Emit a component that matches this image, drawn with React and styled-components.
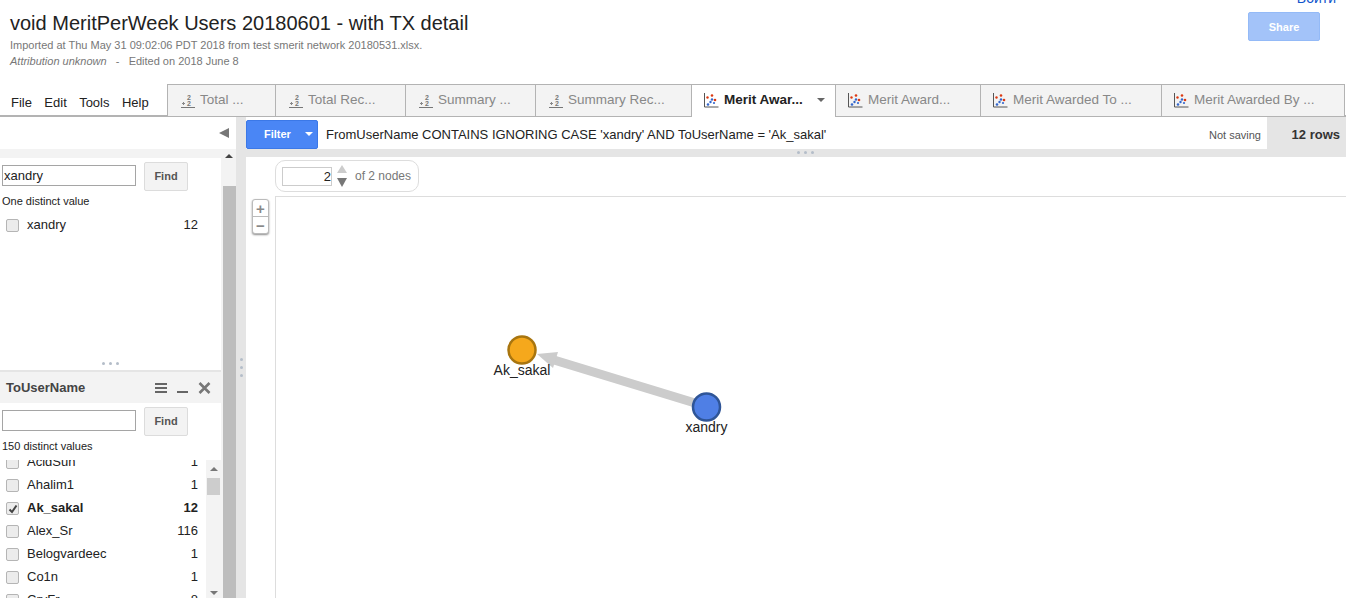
import React from 'react';
import styled, { createGlobalStyle } from 'styled-components';

const GlobalStyle = createGlobalStyle`
  html, body {
    margin: 0;
    padding: 0;
    background: #fff;
    overflow: hidden;
  }
  body {
    font-family: "Liberation Sans", Arial, sans-serif;
    color: #222;
  }
  * { box-sizing: border-box; }
`;

const Page = styled.div`
  width: 1346px;
  height: 598px;
  overflow: hidden;
  display: flex;
  flex-direction: column;
`;

/* header */
const Header = styled.header`
  height: 84px;
  flex: none;
  display: flex;
  justify-content: space-between;
  padding-left: 10px;
`;

const Title = styled.h1`
  margin: 11px 0 0;
  font-size: 20px;
  line-height: 24px;
  font-weight: 400;
  color: #222;
`;

const Meta = styled.div`
  margin-top: ${props => props.gap}px;
  font-size: 11px;
  line-height: 13px;
  color: #777;
  white-space: pre;
  em { font-style: italic; }
`;

const HeaderRight = styled.div`
  width: 72px;
  margin-right: 26px;
  display: flex;
  flex-direction: column;
`;

const SignIn = styled.a`
  height: 12px;
  margin-top: -8px;
  align-self: flex-end;
  margin-right: -16px;
  font-size: 14px;
  line-height: 12px;
  color: #15c;
  white-space: nowrap;
`;

const ShareButton = styled.button`
  width: 72px;
  height: 29px;
  margin-top: 8px;
  border: 1px solid #94baf7;
  border-radius: 2px;
  background: #a3c3f9;
  color: #fff;
  font: 700 11px "Liberation Sans", Arial, sans-serif;
  padding: 0;
`;

/* tab row */
const TabRow = styled.div`
  height: 33px;
  flex: none;
  display: flex;
  border-bottom: 2px solid #b3b3b3;
`;

const Menu = styled.nav`
  width: 167px;
  flex: none;
  display: flex;
  gap: 12.4px;
  padding: 11px 0 0 11px;
  font-size: 13px;
  line-height: 16px;
  color: #222;
`;

const Tab = styled.div`
  width: ${props => props.w}px;
  height: ${props => (props.active ? 33 : 32)}px;
  flex: none;
  display: flex;
  align-items: flex-start;
  padding: 7px 0 0 ${props => (props.chart ? 12 : 13)}px;
  gap: ${props => (props.chart ? 5 : 4)}px;
  background: ${props => (props.active ? '#fff' : '#f3f3f3')};
  border-top: 1px solid #b3b3b3;
  border-left: 1px solid #b3b3b3;
  border-right: ${props => (props.last ? '1px solid #b3b3b3' : 'none')};
  font-size: 13.5px;
  line-height: 16px;
  font-weight: ${props => (props.active ? 700 : 400)};
  color: ${props => (props.active ? '#222' : '#888')};
  white-space: nowrap;
  position: relative;
  z-index: ${props => (props.active ? 1 : 0)};
`;

const TabCaret = styled.span`
  width: 0;
  height: 0;
  margin: 6px 0 0 9px;
  border: 4px solid transparent;
  border-top: 4px solid #666;
  border-bottom: none;
`;

const TableGlyph = () => (
  <svg width="15" height="15" viewBox="0 0 15 15" style={{ flex: 'none', marginTop: 1 }}>
    <text x="6" y="6.5" fontSize="7" fontFamily="Liberation Sans" fill="#777" fontWeight="700">2</text>
    <text x="6" y="12.5" fontSize="7" fontFamily="Liberation Sans" fill="#777" fontWeight="700">2</text>
    <path d="M1 10.5h3M2.5 9v3" stroke="#888" strokeWidth="1" />
    <path d="M0 14.5h14" stroke="#777" strokeWidth="1" />
  </svg>
);

const ChartGlyph = () => (
  <svg width="15" height="16" viewBox="0 0 15 16" style={{ flex: 'none' }}>
    <path d="M0.5 1v14h14" fill="none" stroke="#555" strokeWidth="1" />
    <circle cx="8" cy="3.5" r="1.3" fill="#dc3912" />
    <circle cx="3.5" cy="5.5" r="1.2" fill="#dc3912" />
    <circle cx="11" cy="8" r="1.3" fill="#dc3912" />
    <circle cx="8" cy="7.5" r="1.2" fill="#3366cc" />
    <circle cx="6.5" cy="10" r="1.2" fill="#3366cc" />
    <circle cx="4" cy="12.5" r="1.3" fill="#3366cc" />
    <circle cx="10" cy="11" r="1.1" fill="#3366cc" />
  </svg>
);

/* body */
const Body = styled.div`
  flex: 1;
  min-height: 0;
  display: flex;
`;

const Sidebar = styled.aside`
  width: 236px;
  flex: none;
  display: flex;
  flex-direction: column;
`;

const CollapseRow = styled.div`
  height: 32px;
  flex: none;
  display: flex;
  justify-content: flex-end;
  align-items: center;
  padding-right: 7px;
`;

const CollapseArrow = styled.span`
  width: 0;
  height: 0;
  border: 5px solid transparent;
  border-left: none;
  border-right: 10px solid #777;
`;

const SideScroll = styled.div`
  flex: 1;
  min-height: 0;
  display: flex;
  background: #f3f3f3;
`;

const Cards = styled.div`
  width: 221px;
  flex: none;
  display: flex;
  flex-direction: column;
  padding-top: 9px;
`;

const Scrollbar = styled.div`
  flex: 1;
  display: flex;
  flex-direction: column;
  align-items: center;
  background: #f3f3f3;
`;

const UpArrow = styled.span`
  width: 0;
  height: 0;
  flex: none;
  margin-top: ${props => props.top}px;
  border: 4px solid transparent;
  border-top: none;
  border-bottom: 4px solid ${props => props.color || '#444'};
`;

const DownArrow = styled.span`
  width: 0;
  height: 0;
  flex: none;
  margin-top: ${props => props.top}px;
  border: 4px solid transparent;
  border-bottom: none;
  border-top: 4px solid ${props => props.color || '#444'};
`;

const ScrollThumb = styled.div`
  width: 13px;
  flex: 1;
  margin-top: 28px;
  margin-left: 2px;
  background: #bdbdbd;
`;

const FilterCard = styled.section`
  height: 212px;
  flex: none;
  background: #fff;
  position: relative;
`;

const FindRow = styled.div`
  display: flex;
  align-items: flex-start;
  gap: 8px;
  padding: 4px 0 0 2px;
`;

const FindInput = styled.input`
  width: 134px;
  height: 21px;
  margin-top: 3px;
  padding: 0 1px;
  border: 1px solid #a5a5a5;
  border-radius: 0;
  outline: none;
  font: 13px "Liberation Sans", Arial, sans-serif;
  color: #222;
`;

const FindButton = styled.button`
  width: 44px;
  height: 29px;
  padding: 0 0 2px;
  border: 1px solid #dcdcdc;
  border-radius: 2px;
  background: #f3f3f3;
  color: #555;
  font: 700 11px "Liberation Sans", Arial, sans-serif;
`;

const Distinct = styled.div`
  margin: 4px 0 0 2px;
  font-size: 11px;
  line-height: 12px;
  color: #222;
`;

const Row = styled.div`
  height: 23px;
  display: flex;
  align-items: center;
  padding: 0 8px 0 6px;
  font-size: 13px;
  font-weight: ${props => (props.checked ? 700 : 400)};
  color: #222;
`;

const RowName = styled.span`
  flex: 1;
  margin-left: 8px;
`;

const Box = styled.span`
  width: 13px;
  height: 13px;
  flex: none;
  margin-top: 2px;
  display: flex;
  align-items: center;
  justify-content: center;
  border: 1px solid #b5b5b5;
  border-radius: 2px;
  background: #ececec;
`;

const SingleList = styled.div`
  width: 206px;
  margin-top: 6px;
`;

const Grip = styled.div`
  position: absolute;
  ${props => props.vertical
    ? 'left: 4px; top: 50%; flex-direction: column;'
    : `left: calc(50% + ${props.shift || 0}px); bottom: ${props.bottom}px; margin-left: -9px;`}
  display: flex;
  gap: ${props => (props.vertical ? 5 : 4)}px;
  span {
    width: 3px;
    height: 3px;
    border-radius: 50%;
    background: #b4bdc9;
  }
`;

const Dots = ({ vertical, shift, bottom }) => (
  <Grip vertical={vertical} shift={shift} bottom={bottom}>
    <span /><span /><span />
  </Grip>
);

const PaneRule = styled.div`
  height: 2px;
  flex: none;
  background: #e5e5e5;
`;

const CardHead = styled.div`
  height: 31px;
  flex: none;
  display: flex;
  align-items: center;
  padding: 0 10px 0 6px;
  background: #f3f3f3;
  font-size: 13px;
  font-weight: 700;
  color: #444;
`;

const HeadName = styled.span`
  flex: 1;
`;

const HeadTools = styled.span`
  display: flex;
  align-items: center;
  gap: 10px;
`;

const ValueCard = styled.section`
  flex: 1;
  min-height: 0;
  background: #fff;
  display: flex;
  flex-direction: column;
`;

const ScrollList = styled.div`
  flex: 1;
  min-height: 0;
  margin-top: 8px;
  display: flex;
  overflow: hidden;
`;

const ListClip = styled.div`
  width: 206px;
  flex: none;
  overflow: hidden;
`;

const ListInner = styled.div`
  margin-top: -10px;
`;

const ListBar = styled.div`
  width: 15px;
  flex: none;
  display: flex;
  flex-direction: column;
  align-items: center;
  background: #f3f3f3;
`;

const ListThumb = styled.div`
  width: 13px;
  height: 17px;
  margin-top: 7px;
  background: #cdcdcd;
`;

const Splitter = styled.div`
  width: 10px;
  flex: none;
  background: #e5e5e5;
  position: relative;
`;

/* main column */
const Main = styled.main`
  flex: 1;
  min-width: 0;
  display: flex;
  flex-direction: column;
`;

const FilterBar = styled.div`
  height: 40px;
  flex: none;
  display: flex;
`;

const FilterLeft = styled.div`
  flex: 1;
  min-width: 0;
  display: flex;
  flex-direction: column;
`;

const FilterLine = styled.div`
  height: 32px;
  flex: none;
  display: flex;
  align-items: center;
  padding-top: 3px;
  font-size: 13px;
  color: #222;
  white-space: nowrap;
`;

const FilterButton = styled.button`
  width: 72px;
  height: 29px;
  flex: none;
  display: flex;
  align-items: center;
  padding: 0 0 1px 17px;
  border: 1px solid #3b78e7;
  border-radius: 2px;
  background: #4a86f5;
  color: #fff;
  font: 700 11px "Liberation Sans", Arial, sans-serif;
`;

const FilterCaret = styled.span`
  width: 0;
  height: 0;
  margin-left: 14px;
  border: 4px solid transparent;
  border-bottom: none;
  border-top: 4px solid #fff;
`;

const FilterText = styled.span`
  flex: 1;
  margin-left: 8px;
`;

const Saving = styled.span`
  margin-right: 6px;
  font-size: 11px;
  color: #555;
`;

const BarBand = styled.div`
  height: 8px;
  flex: none;
  background: #e5e5e5;
  position: relative;
`;

const RowCount = styled.div`
  width: 79px;
  flex: none;
  background: #e5e5e5;
  display: flex;
  align-items: center;
  justify-content: flex-end;
  padding: 0 6px 5px 0;
  font-size: 13px;
  font-weight: 700;
  color: #333;
`;

const Graph = styled.div`
  flex: 1;
  min-height: 0;
  display: flex;
  position: relative;
`;

const Gutter = styled.div`
  width: 29px;
  flex: none;
  padding: 42px 0 0 6px;
`;

const ZoomBox = styled.div`
  width: 17px;
  height: 35px;
  display: flex;
  flex-direction: column;
  background: #fff;
  border: 1px solid #bbb;
  border-radius: 3px;
  box-shadow: 0 1px 2px rgba(0, 0, 0, 0.45);
`;

const ZoomKey = styled.span`
  flex: 1;
  display: flex;
  align-items: center;
  justify-content: center;
  font-size: 15px;
  font-weight: 700;
  line-height: 1;
  color: #888;
  & + & { border-top: 1px solid #bbb; }
`;

const GraphColumn = styled.div`
  flex: 1;
  min-width: 0;
  display: flex;
  flex-direction: column;
`;

const PagerWrap = styled.div`
  height: 39px;
  flex: none;
  padding-top: 3px;
`;

const Pager = styled.div`
  width: 144px;
  height: 32px;
  display: flex;
  align-items: center;
  padding-left: 6px;
  border: 1px solid #ddd;
  border-radius: 10px;
  font-size: 12px;
  color: #777;
`;

const PageInput = styled.div`
  width: 50px;
  height: 19px;
  flex: none;
  border: 1px solid #ccc;
  text-align: right;
  font-size: 13px;
  line-height: 17px;
  color: #222;
`;

const Spinner = styled.div`
  width: 20px;
  flex: none;
  display: flex;
  flex-direction: column;
  align-items: center;
`;

const BigUp = styled.span`
  width: 0;
  height: 0;
  flex: none;
  border: 5px solid transparent;
  border-top: none;
  border-bottom: 8px solid #ccc;
`;

const BigDown = styled.span`
  width: 0;
  height: 0;
  flex: none;
  margin-top: 5px;
  border: 5px solid transparent;
  border-bottom: none;
  border-top: 9px solid #777;
`;

const PagerLabel = styled.span`
  margin-left: 3px;
  margin-top: -1px;
`;

const Canvas = styled.div`
  flex: 1;
  min-height: 0;
  border-top: 1px solid #ddd;
  border-left: 1px solid #ddd;
  position: relative;
`;

const NetworkSvg = styled.svg`
  position: absolute;
  left: 0;
  top: 0;
  text {
    font-family: "Liberation Sans", Arial, sans-serif;
    font-size: 14px;
    fill: #222;
    text-anchor: middle;
  }
`;

const tabs = [
  { w: 108, label: 'Total ...' },
  { w: 130, label: 'Total Rec...' },
  { w: 130, label: 'Summary ...' },
  { w: 156, label: 'Summary Rec...' },
  { w: 144, label: 'Merit Awar...', chart: true, active: true },
  { w: 145, label: 'Merit Award...', chart: true },
  { w: 181, label: 'Merit Awarded To ...', chart: true },
  { w: 184, label: 'Merit Awarded By ...', chart: true, last: true },
];

const users = [
  ['AcidSun', 1],
  ['Ahalim1', 1],
  ['Ak_sakal', 12, true],
  ['Alex_Sr', 116],
  ['Belogvardeec', 1],
  ['Co1n', 1],
  ['CryFr', 8],
];

function CheckRow({ name, count, checked }) {
  return (
    <Row checked={checked}>
      <Box>
        {checked && (
          <svg width="10" height="10" viewBox="0 0 10 10">
            <path d="M1.5 5.5 4 8l4.5-6.5" fill="none" stroke="#444" strokeWidth="2" />
          </svg>
        )}
      </Box>
      <RowName>{name}</RowName>
      <span>{count}</span>
    </Row>
  );
}

export default function App() {
  return (
    <Page>
      <GlobalStyle />
      <Header>
        <div>
          <Title>void MeritPerWeek Users 20180601 - with TX detail</Title>
          <Meta gap={4}>Imported at Thu May 31 09:02:06 PDT 2018 from test smerit network 20180531.xlsx.</Meta>
          <Meta gap={3}><em>Attribution unknown</em>{'   -   '}Edited on 2018 June 8</Meta>
        </div>
        <HeaderRight>
          <SignIn>Войти</SignIn>
          <ShareButton>Share</ShareButton>
        </HeaderRight>
      </Header>

      <TabRow>
        <Menu>
          <span>File</span><span>Edit</span><span>Tools</span><span>Help</span>
        </Menu>
        {tabs.map(tab => (
          <Tab key={tab.label} w={tab.w} chart={tab.chart} active={tab.active} last={tab.last}>
            {tab.chart ? <ChartGlyph /> : <TableGlyph />}
            <span>{tab.label}</span>
            {tab.active && <TabCaret />}
          </Tab>
        ))}
      </TabRow>

      <Body>
        <Sidebar>
          <CollapseRow><CollapseArrow /></CollapseRow>
          <SideScroll>
            <Cards>
              <FilterCard>
                <FindRow>
                  <FindInput defaultValue="xandry" />
                  <FindButton>Find</FindButton>
                </FindRow>
                <Distinct>One distinct value</Distinct>
                <SingleList>
                  <CheckRow name="xandry" count={12} />
                </SingleList>
                <Dots bottom={5} />
              </FilterCard>
              <PaneRule />
              <ValueCard>
                <CardHead>
                  <HeadName>ToUserName</HeadName>
                  <HeadTools>
                    <svg width="12" height="10" viewBox="0 0 12 10"><path d="M0 1h12M0 5h12M0 9h12" stroke="#666" strokeWidth="2" /></svg>
                    <svg width="11" height="10" viewBox="0 0 11 10"><path d="M0 9h11" stroke="#666" strokeWidth="2" /></svg>
                    <svg width="13" height="12" viewBox="0 0 13 12"><path d="M1.5 1l10 10M11.5 1l-10 10" stroke="#777" strokeWidth="2.6" /></svg>
                  </HeadTools>
                </CardHead>
                <FindRow>
                  <FindInput />
                  <FindButton>Find</FindButton>
                </FindRow>
                <Distinct>150 distinct values</Distinct>
                <ScrollList>
                  <ListClip>
                    <ListInner>
                      {users.map(([name, count, checked]) => (
                        <CheckRow key={name} name={name} count={count} checked={checked} />
                      ))}
                    </ListInner>
                  </ListClip>
                  <ListBar>
                    <UpArrow top={7} color="#777" />
                    <ListThumb />
                    <DownArrow top={96} color="#777" />
                  </ListBar>
                </ScrollList>
              </ValueCard>
            </Cards>
            <Scrollbar>
              <UpArrow top={5} />
              <ScrollThumb />
            </Scrollbar>
          </SideScroll>
        </Sidebar>

        <Splitter><Dots vertical /></Splitter>

        <Main>
          <FilterBar>
            <FilterLeft>
              <FilterLine>
                <FilterButton>Filter<FilterCaret /></FilterButton>
                <FilterText>FromUserName CONTAINS IGNORING CASE 'xandry' AND ToUserName = 'Ak_sakal'</FilterText>
                <Saving>Not saving</Saving>
              </FilterLine>
              <BarBand><Dots shift={49} bottom={3} /></BarBand>
            </FilterLeft>
            <RowCount>12 rows</RowCount>
          </FilterBar>
          <Graph>
            <Gutter>
              <ZoomBox>
                <ZoomKey>+</ZoomKey>
                <ZoomKey>−</ZoomKey>
              </ZoomBox>
            </Gutter>
            <GraphColumn>
              <PagerWrap>
                <Pager>
                  <PageInput>2</PageInput>
                  <Spinner><BigUp /><BigDown /></Spinner>
                  <PagerLabel>of 2 nodes</PagerLabel>
                </Pager>
              </PagerWrap>
              <Canvas>
                <NetworkSvg width="1070" height="401" viewBox="276 197 1070 401">
                  <path d="M695 403 554 360" stroke="#ccc" strokeWidth="9" fill="none" />
                  <path d="M537 354 558 352 553 368Z" fill="#ccc" />
                  <circle cx="522" cy="350" r="13.5" fill="#f5a81c" stroke="#a8750f" strokeWidth="2.5" />
                  <circle cx="706.5" cy="407" r="13.5" fill="#4f7fe5" stroke="#2f5597" strokeWidth="2.5" />
                  <text x="522" y="375">Ak_sakal</text>
                  <text x="706.5" y="432">xandry</text>
                </NetworkSvg>
              </Canvas>
            </GraphColumn>
          </Graph>
        </Main>
      </Body>
    </Page>
  );
}
